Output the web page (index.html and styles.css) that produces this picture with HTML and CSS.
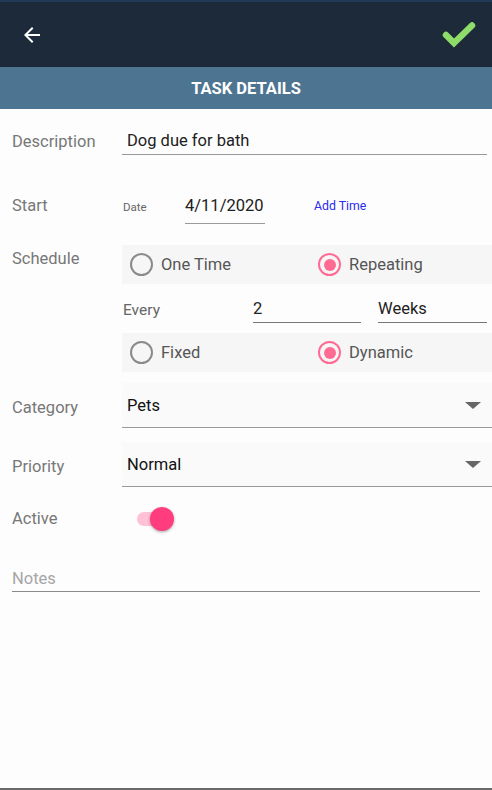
FILE: index.html
```html
<!DOCTYPE html>
<html>
<head>
<meta charset="utf-8">
<link rel="stylesheet" href="styles.css">
</head>
<body>
<div class="app">
  <header class="topbar">
    <svg class="back" width="24" height="24" viewBox="0 0 24 24"><path d="M20 11H7.83l5.59-5.59L12 4l-8 8 8 8 1.41-1.41L7.83 13H20v-2z" fill="#fff"/></svg>
    <svg class="check" width="40" height="32" viewBox="0 0 40 32"><path d="M7 17 L15 25 L33 7.5" fill="none" stroke="#8edc69" stroke-width="6.5" stroke-linecap="round" stroke-linejoin="miter"/></svg>
  </header>
  <div class="subbar">TASK DETAILS</div>
  <main class="form">
    <div class="row row-desc">
      <div class="label">Description</div>
      <div class="field field-desc">Dog due for bath</div>
    </div>
    <div class="row row-start">
      <div class="label">Start</div>
      <div class="start-body">
        <span class="mini">Date</span>
        <span class="field field-date">4/11/2020</span>
        <span class="addtime">Add Time</span>
      </div>
    </div>
    <div class="row row-sched">
      <div class="label label-top">Schedule</div>
      <div class="sched-body">
        <div class="radios">
          <div class="radio"><span class="circle"></span>One Time</div>
          <div class="radio"><span class="circle on"></span>Repeating</div>
        </div>
        <div class="every">
          <span class="every-label">Every</span>
          <span class="field field-num">2</span>
          <span class="field field-unit">Weeks</span>
        </div>
        <div class="radios">
          <div class="radio"><span class="circle"></span>Fixed</div>
          <div class="radio"><span class="circle on"></span>Dynamic</div>
        </div>
      </div>
    </div>
    <div class="row row-cat">
      <div class="label">Category</div>
      <div class="select">Pets<span class="caret"></span></div>
    </div>
    <div class="row row-pri">
      <div class="label">Priority</div>
      <div class="select">Normal<span class="caret"></span></div>
    </div>
    <div class="row row-active">
      <div class="label">Active</div>
      <div class="toggle"><span class="track"></span><span class="thumb"></span></div>
    </div>
    <div class="notes">Notes</div>
  </main>
  <div class="bottomline"></div>
</div>
</body>
</html>
```
FILE: styles.css
```css
* { box-sizing: border-box; }
html, body { margin: 0; padding: 0; }
body {
  font-family: Roboto, "Noto Sans", "Liberation Sans", sans-serif;
  background: #fdfdfd;
  color: #212121;
}
.app {
  width: 492px;
  height: 790px;
  display: flex;
  flex-direction: column;
  overflow: hidden;
}
.topbar {
  height: 67px;
  flex: none;
  background: #1c2a39;
  border-top: 2px solid #1f3b58;
  display: flex;
  align-items: center;
  justify-content: space-between;
  padding: 0 13px 0 20px;
}
.back { display: block; }
.check { display: block; margin-top: -2px; }
.subbar {
  height: 42px;
  flex: none;
  background: #4d7592;
  color: #fff;
  font-weight: 700;
  font-size: 16.5px;
  display: flex;
  align-items: center;
  justify-content: center;
  padding-top: 1px;
}
.form {
  flex: 1;
  display: flex;
  flex-direction: column;
}
.row {
  display: flex;
  align-items: center;
}
.label {
  width: 122px;
  flex: none;
  padding-left: 12px;
  font-size: 16.5px;
  color: #777;
}
.field {
  font-size: 16.5px;
  color: #212121;
  border-bottom: 1.5px solid #9a9a9a;
}
.row-desc { margin-top: 16px; height: 30px; }
.row-desc .label { padding-top: 2px; }
.field-desc {
  width: 365px;
  height: 29px;
  padding: 5px 0 0 5px;
}
.row-start { margin-top: 35px; height: 34px; align-items: flex-start; }
.row-start .label { padding-top: 6px; }
.start-body {
  display: flex;
  align-items: flex-start;
}
.mini {
  font-size: 11.5px;
  color: #666;
  width: 63px;
  padding-left: 1px;
  padding-top: 10px;
}
.field-date {
  width: 80px;
  height: 34px;
  padding-top: 6px;
}
.addtime {
  margin-left: 49px;
  font-size: 12.3px;
  color: #2a2af0;
  padding-top: 9px;
}
.row-sched { margin-top: 21px; align-items: flex-start; }
.label-top { padding-top: 4px; }
.sched-body {
  flex: 1;
  display: flex;
  flex-direction: column;
}
.radios {
  display: grid;
  grid-template-columns: 188px 1fr;
  background: #f6f6f6;
  height: 39px;
}
.radio {
  display: flex;
  align-items: center;
  padding-left: 8px;
  font-size: 16.5px;
  color: #555;
}
.circle {
  width: 23px;
  height: 23px;
  border: 2px solid #8a8a8a;
  border-radius: 50%;
  margin-right: 8px;
  flex: none;
  position: relative;
}
.circle.on { border-color: #ff6b93; }
.circle.on::after {
  content: "";
  position: absolute;
  left: 3.5px;
  top: 3.5px;
  width: 12px;
  height: 12px;
  border-radius: 50%;
  background: #ff6b93;
}
.every {
  height: 49px;
  display: flex;
  align-items: center;
}
.every-label {
  width: 131px;
  padding-left: 1px;
  padding-top: 3px;
  font-size: 15.5px;
  color: #666;
}
.field-num {
  width: 108px;
  height: 27px;
  padding-top: 3px;
  margin-top: 1px;
  border-bottom-color: #777;
}
.field-unit {
  width: 109px;
  height: 27px;
  margin-left: 17px;
  margin-top: 1px;
  padding-top: 3px;
  border-bottom-color: #777;
}
.row-cat { margin-top: 11px; }
.row-cat .label, .row-pri .label { padding-top: 3px; }
.row-pri { margin-top: 14px; }
.select {
  flex: 1;
  height: 45px;
  background: #fafafa;
  border-bottom: 1.5px solid #9a9a9a;
  display: flex;
  align-items: center;
  justify-content: space-between;
  padding: 0 11px 0 5px;
  font-size: 16.5px;
  color: #111;
}
.caret {
  width: 0;
  height: 0;
  border-left: 8px solid transparent;
  border-right: 8px solid transparent;
  border-top: 7px solid #666;
}
.row-active { margin-top: 19px; height: 26px; }
.row-active .label { padding-bottom: 2px; }
.toggle {
  position: relative;
  width: 40px;
  height: 26px;
  margin-left: 15px;
}
.track {
  position: absolute;
  left: 0;
  top: 6px;
  width: 34px;
  height: 14px;
  border-radius: 7px;
  background: #ffc1d5;
}
.thumb {
  position: absolute;
  left: 13px;
  top: 1px;
  width: 24px;
  height: 24px;
  border-radius: 50%;
  background: #ff3d7e;
  box-shadow: 0 1px 3px rgba(0,0,0,0.35);
}
.notes {
  margin: 35px 12px 0 12px;
  width: 468px;
  font-size: 16.5px;
  color: #a6a6a6;
  height: 25px;
  padding-top: 2px;
  border-bottom: 1.5px solid #8a8a8a;
}
.bottomline {
  flex: none;
  height: 2px;
  background: #6a6a6a;
}
```
